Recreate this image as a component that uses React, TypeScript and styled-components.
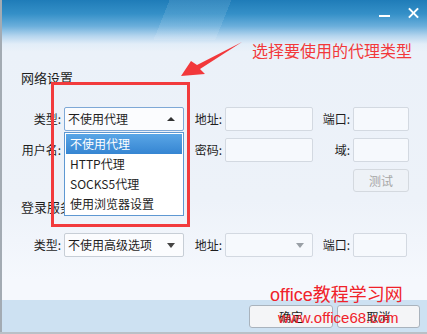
import React from 'react';
import styled, { createGlobalStyle } from 'styled-components';

const GlobalStyle = createGlobalStyle`
  html, body {
    margin: 0;
    padding: 0;
    background: #b9c0c7;
  }
  body {
    font-family: "Noto Sans CJK SC", "Liberation Sans", sans-serif;
    font-size: 12px;
    color: #1e1e1e;
  }
`;

const Window = styled.div`
  position: relative;
  width: 425px;
  height: 332px;
  border-left: 2px solid #a3abb3;
  display: flex;
  flex-direction: column;
  overflow: hidden;
  background:
    linear-gradient(112deg, transparent 0 38%, rgba(255,255,255,0.10) 38% 52%, transparent 52% 100%) top / 100% 40px no-repeat,
    linear-gradient(to bottom, #1f7cb8 0px, #3590c8 14px, #6aaedb 26px, #b5d5ee 36px, #e2edf8 44px, #ebf1f9 52px, #edf2f9 200px, #f5f8fd 280px);
`;

const TitleBar = styled.div`
  height: 36px;
  display: flex;
  justify-content: flex-end;
  align-items: flex-start;
  padding: 8px 8px 0 0;
  box-sizing: border-box;
  gap: 18px;
`;

const ControlButton = styled.div<{ kind: 'min' | 'close' }>`
  position: relative;
  width: 11px;
  height: 11px;
  ${p => p.kind === 'min' ? `
    &::after {
      content: '';
      position: absolute;
      left: 0; right: 0; top: 7px;
      height: 2px;
      background: #fff;
    }
  ` : `
    &::before, &::after {
      content: '';
      position: absolute;
      left: -1px; right: -1px; top: 4px;
      height: 2px;
      background: #fff;
    }
    &::before { transform: rotate(45deg); }
    &::after { transform: rotate(-45deg); }
  `}
`;

const Body = styled.div`
  flex: 1;
  display: flex;
  flex-direction: column;
  padding-top: 33px;
`;

const SectionTitle = styled.div<{ gapTop?: number }>`
  font-size: 13px;
  line-height: 18px;
  padding-left: 19px;
  margin-top: ${p => p.gapTop ?? 0}px;
  color: #1e1e1e;
`;

const FormGrid = styled.div<{ gapTop: number }>`
  display: grid;
  grid-template-columns: 62px 120px 41px 88px 40px 56px;
  grid-auto-rows: 24px;
  row-gap: 7px;
  margin-top: ${p => p.gapTop}px;
`;

const Label = styled.div`
  text-align: right;
  padding-right: 3px;
  line-height: 24px;
  white-space: nowrap;
`;

const Field = styled.div<{ narrow?: boolean }>`
  position: relative;
  box-sizing: border-box;
  height: 24px;
  width: ${p => (p.narrow ? '54px' : '100%')};
  background: #f6f9fd;
  border: 1px solid #d3d9e1;
  border-radius: 2px;
`;

const Select = styled.div<{ focused?: boolean }>`
  position: relative;
  box-sizing: border-box;
  height: 24px;
  background: #fbfcfe;
  border: 1px solid ${p => (p.focused ? '#7ea8d6' : '#c7ced6')};
  border-radius: 2px;
  padding-left: 3px;
  line-height: 22px;
`;

const Caret = styled.span<{ up?: boolean; muted?: boolean }>`
  position: absolute;
  right: 8px;
  top: 9px;
  width: 0;
  height: 0;
  border-left: 4px solid transparent;
  border-right: 4px solid transparent;
  ${p => p.up
    ? `border-bottom: 4px solid #333;`
    : `border-top: 5px solid ${p.muted ? '#9aa0a6' : '#444'};`}
`;

const TestButton = styled.div`
  grid-column: 6;
  box-sizing: border-box;
  height: 23px;
  border: 1px solid #d4d9df;
  border-radius: 3px;
  background: #eef2f7;
  color: #a6a6a6;
  text-align: center;
  line-height: 21px;
`;

const Spacer = styled.div`
  flex: 1;
`;

const Footer = styled.div`
  height: 32px;
  background: #cde1f2;
  display: flex;
  justify-content: flex-end;
  align-items: flex-start;
  gap: 4px;
  padding: 5px 7px 0 0;
  box-sizing: border-box;
`;

const FooterButton = styled.div<{ w: number }>`
  box-sizing: border-box;
  width: ${p => p.w}px;
  height: 23px;
  border: 1px solid #a9b3bd;
  border-radius: 3px;
  background: #f4f5f7;
  text-align: center;
  line-height: 21px;
`;

const DropList = styled.div`
  position: absolute;
  left: 62px;
  top: 132px;
  width: 120px;
  box-sizing: border-box;
  border: 1px solid #5e98d2;
  background: #ffffff;
  padding: 1px;
`;

const DropItem = styled.div<{ active?: boolean }>`
  height: 20px;
  line-height: 20px;
  padding-left: 4px;
  white-space: nowrap;
  color: ${p => (p.active ? '#fff' : '#1e1e1e')};
  background: ${p => (p.active ? 'linear-gradient(to bottom, #5aa6e6, #3585d2)' : 'transparent')};
`;

const RedFrame = styled.div`
  position: absolute;
  left: 49px;
  top: 82px;
  width: 139px;
  height: 145px;
  box-sizing: border-box;
  border: 3px solid #f23b3d;
`;

const Annotation = styled.div`
  position: absolute;
  left: 250px;
  top: 40px;
  font-size: 16px;
  line-height: 20px;
  color: #f2383b;
  white-space: nowrap;
`;

const ArrowSvg = styled.svg`
  position: absolute;
  left: -2px;
  top: 0;
  pointer-events: none;
`;

const Watermark = styled.div<{ size: number; left: number; top: number }>`
  position: absolute;
  left: ${p => p.left}px;
  top: ${p => p.top}px;
  font-family: "Liberation Sans", "Noto Sans CJK SC", sans-serif;
  font-size: ${p => p.size}px;
  line-height: 1;
  color: #f0222a;
  white-space: nowrap;
`;

const proxyOptions = ['不使用代理', 'HTTP代理', 'SOCKS5代理', '使用浏览器设置'];

export default function App() {
  return (
    <>
      <GlobalStyle />
      <Window>
        <TitleBar>
          <ControlButton kind="min" />
          <ControlButton kind="close" />
        </TitleBar>
        <Body>
          <SectionTitle>网络设置</SectionTitle>
          <FormGrid gapTop={20}>
            <Label>类型:</Label>
            <Select focused>
              不使用代理
              <Caret up />
            </Select>
            <Label>地址:</Label>
            <Field />
            <Label>端口:</Label>
            <Field />

            <Label>用户名:</Label>
            <Field />
            <Label>密码:</Label>
            <Field />
            <Label>域:</Label>
            <Field />

            <TestButton>测试</TestButton>
          </FormGrid>

          <SectionTitle gapTop={5}>登录服务器</SectionTitle>
          <FormGrid gapTop={17}>
            <Label>类型:</Label>
            <Select>
              不使用高级选项
              <Caret />
            </Select>
            <Label>地址:</Label>
            <Field>
              <Caret muted />
            </Field>
            <Label>端口:</Label>
            <Field narrow />
          </FormGrid>
          <Spacer />
          <Footer>
            <FooterButton w={84}>确定</FooterButton>
            <FooterButton w={83}>取消</FooterButton>
          </Footer>
        </Body>

        <DropList>
          {proxyOptions.map((opt, i) => (
            <DropItem key={opt} active={i === 0}>{opt}</DropItem>
          ))}
        </DropList>

        <RedFrame />
        <Annotation>选择要使用的代理类型</Annotation>
        <ArrowSvg width="427" height="334" viewBox="0 0 427 334">
          <polygon points="181,76 191,61 197,65 242,42 200,69 205,74" fill="#f2383b" />
        </ArrowSvg>

        <Watermark size={18} left={268} top={286}>office教程学习网</Watermark>
        <Watermark size={15} left={276} top={310}>www.office68.com</Watermark>
      </Window>
    </>
  );
}
